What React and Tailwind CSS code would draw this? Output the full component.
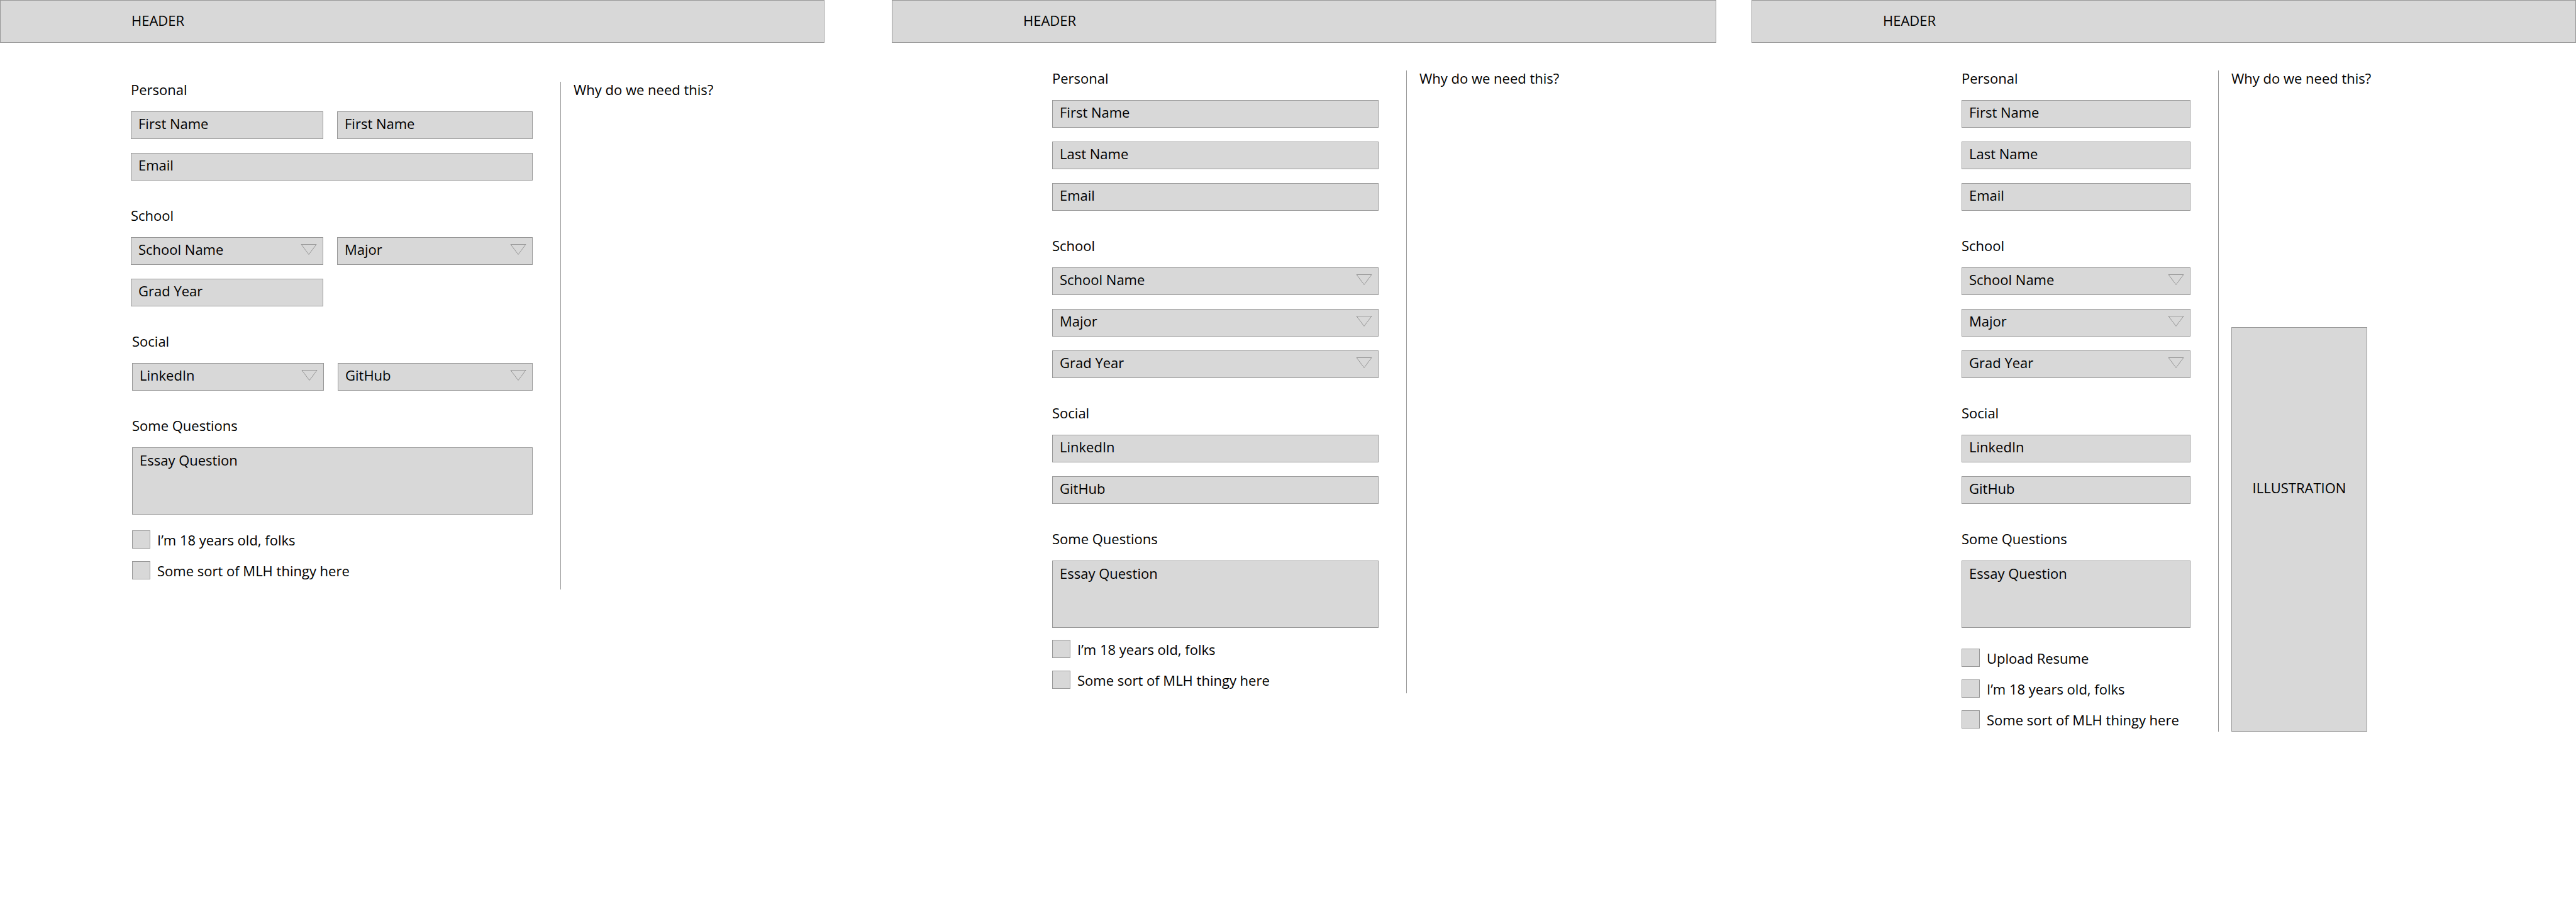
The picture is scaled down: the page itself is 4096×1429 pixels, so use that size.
import React, { useId } from "react";

const box = "border border-[#979797] bg-[#d8d8d8]";
const field =
  "block h-11 w-full rounded-none border border-[#979797] bg-[#d8d8d8] pl-[11px] pb-1.5 text-black placeholder:text-black placeholder:opacity-100";

function TextField({ label, wide }) {
  return (
    <div className={wide ? "col-span-full" : ""}>
      <input type="text" aria-label={label} placeholder={label} className={field} />
    </div>
  );
}

function SelectField({ label }) {
  return (
    <div className="relative">
      <select aria-label={label} className={field + " appearance-none"}>
        <option>{label}</option>
      </select>
      <svg
        className="pointer-events-none absolute right-[10px] top-[10px] h-[19px] w-[26px]"
        viewBox="0 0 26 19"
        fill="none"
        stroke="#979797"
      >
        <path d="M1 1.5h24L13 17.5z" />
      </svg>
    </div>
  );
}

function Section({ title, columns, indent, children }) {
  return (
    <section className={indent ? "pl-0.5" : ""}>
      <h2 className="mb-[21px]">{title}</h2>
      <div
        className={
          columns
            ? "grid grid-cols-[306fr_311fr] gap-[22px]"
            : "grid grid-cols-1 gap-[22px]"
        }
      >
        {children}
      </div>
    </section>
  );
}

function Check({ label }) {
  const id = useId();
  return (
    <div className="flex items-center gap-[11px]">
      <input
        id={id}
        type="checkbox"
        className={"size-[29px] shrink-0 appearance-none " + box}
      />
      <label htmlFor={id}>{label}</label>
    </div>
  );
}

function Questions({ indent, checks, spacing }) {
  return (
    <Section title="Some Questions" indent={indent}>
      <div>
        <textarea
          aria-label="Essay Question"
          placeholder="Essay Question"
          className={
            "block h-[107px] w-full resize-none pl-[11px] pt-[5px] placeholder:text-black placeholder:opacity-100 " +
            box
          }
        />
        <div className={"grid gap-5 " + spacing}>
          {checks.map((c) => (
            <Check key={c} label={c} />
          ))}
        </div>
      </div>
    </Section>
  );
}

function Panel({ className, bodyClass, formClass, children, aside }) {
  return (
    <div className={"min-w-0 flex-1 " + className}>
      <header className={"flex h-[68px] items-center pb-1 pl-[208px] " + box}>
        <h1>HEADER</h1>
      </header>
      <main className={"grid " + bodyClass}>
        <form className={"grid content-start gap-[41px] pr-11 " + formClass}>{children}</form>
        <aside className="mt-0.5 flex flex-col items-start border-l border-[#979797] pl-5 leading-6">
          <h2>Why do we need this?</h2>
          {aside}
        </aside>
      </main>
    </div>
  );
}

const AGE = "I’m 18 years old, folks";
const MLH = "Some sort of MLH thingy here";

export default function App() {
  return (
    <div className="flex min-h-screen items-start bg-white font-['Open_Sans',sans-serif] text-[22px] leading-7 text-black">
      <Panel
        className=""
        bodyClass="grid-cols-[683fr_420fr] pt-[60px] pl-[208px]"
        formClass="pb-4"
      >
        <Section title="Personal" columns>
          <TextField label="First Name" />
          <TextField label="First Name" />
          <TextField label="Email" wide />
        </Section>
        <Section title="School" columns>
          <SelectField label="School Name" />
          <SelectField label="Major" />
          <TextField label="Grad Year" />
        </Section>
        <Section title="Social" columns indent>
          <SelectField label="LinkedIn" />
          <SelectField label="GitHub" />
        </Section>
        <Questions indent checks={[AGE, MLH]} spacing="mt-[25px]" />
      </Panel>

      <Panel
        className="ml-[107px]"
        bodyClass="grid-cols-[563fr_493fr] pt-[42px] pl-[255px]"
        formClass="pb-[7px]"
      >
        <Section title="Personal">
          <TextField label="First Name" />
          <TextField label="Last Name" />
          <TextField label="Email" />
        </Section>
        <Section title="School">
          <SelectField label="School Name" />
          <SelectField label="Major" />
          <SelectField label="Grad Year" />
        </Section>
        <Section title="Social">
          <TextField label="LinkedIn" />
          <TextField label="GitHub" />
        </Section>
        <Questions checks={[AGE, MLH]} spacing="mt-[19px]" />
      </Panel>

      <Panel
        className="ml-[56px]"
        bodyClass="grid-cols-[408fr_569fr] pt-[42px] pl-[334px]"
        formClass="pb-[5px]"
        aside={
          <div className={"mt-96 flex w-[216px] grow justify-center pt-[242px] " + box}>
            ILLUSTRATION
          </div>
        }
      >
        <Section title="Personal">
          <TextField label="First Name" />
          <TextField label="Last Name" />
          <TextField label="Email" />
        </Section>
        <Section title="School">
          <SelectField label="School Name" />
          <SelectField label="Major" />
          <SelectField label="Grad Year" />
        </Section>
        <Section title="Social">
          <TextField label="LinkedIn" />
          <TextField label="GitHub" />
        </Section>
        <Questions checks={["Upload Resume", AGE, MLH]} spacing="mt-[33px]" />
      </Panel>
    </div>
  );
}
